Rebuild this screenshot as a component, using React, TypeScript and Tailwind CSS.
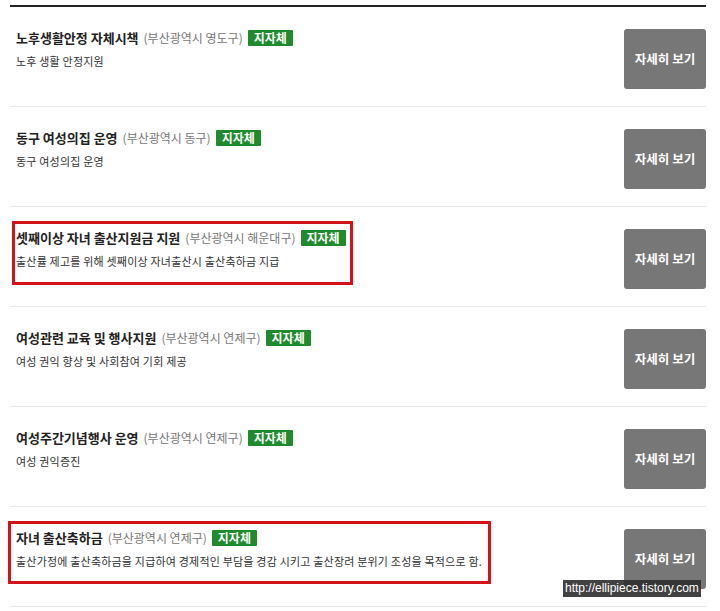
const items = [
  {
    title: "노후생활안정 자체시책",
    region: "(부산광역시 영도구)",
    desc: "노후 생활 안정지원",
    mark: null,
  },
  {
    title: "동구 여성의집 운영",
    region: "(부산광역시 동구)",
    desc: "동구 여성의집 운영",
    mark: null,
  },
  {
    title: "셋째이상 자녀 출산지원금 지원",
    region: "(부산광역시 해운대구)",
    desc: "출산률 제고를 위해 셋째이상 자녀출산시 출산축하금 지급",
    mark: "a",
  },
  {
    title: "여성관련 교육 및 행사지원",
    region: "(부산광역시 연제구)",
    desc: "여성 권익 향상 및 사회참여 기회 제공",
    mark: null,
  },
  {
    title: "여성주간기념행사 운영",
    region: "(부산광역시 연제구)",
    desc: "여성 권익증진",
    mark: null,
  },
  {
    title: "자녀 출산축하금",
    region: "(부산광역시 연제구)",
    desc: "출산가정에 출산축하금을 지급하여 경제적인 부담을 경감 시키고 출산장려 분위기 조성을 목적으로 함.",
    mark: "b",
  },
];

export default function App() {
  return (
    <div
      className="relative h-[611px] w-[720px] overflow-hidden bg-white"
      style={{ fontFamily: '"Noto Sans CJK KR", "Noto Sans", sans-serif' }}
    >
      <div className="ml-[10px] mt-[5px] w-[696px] border-t-2 border-[#222]">
        {items.map((item) => (
          <div
            key={item.title}
            className="flex h-[100px] items-start justify-between border-b border-[#e8e8e8] pl-[6px]"
          >
            <div className="relative pt-[21px]">
              {item.mark === "a" && (
                <span className="pointer-events-none absolute left-[-4px] top-[14px] h-[64px] w-[341px] border-[3px] border-[#d4121c]" />
              )}
              {item.mark === "b" && (
                <span className="pointer-events-none absolute left-[-8px] top-[14px] h-[63px] w-[483px] border-[3px] border-[#d4121c]" />
              )}
              <div className="flex items-center text-[13px] leading-[20px]">
                <span className="font-bold text-[#222]">{item.title}</span>
                <span className="ml-[5px] text-[12px] text-[#777]">{item.region}</span>
                <span className="ml-[5px] rounded-[1px] bg-[#1f8b2c] px-[6px] text-[12px] font-bold leading-[16px] text-white">
                  지자체
                </span>
              </div>
              <p className="mt-[4px] text-[11px] leading-[18px] tracking-[0.2px] text-[#333]">{item.desc}</p>
            </div>
            <button className="mt-[22px] flex h-[60px] w-[82px] items-center justify-center rounded-[3px] bg-[#777] text-[12.5px] font-bold text-white">
              자세히 보기
            </button>
          </div>
        ))}
      </div>
      <div
        className="absolute left-[563px] top-[580px] bg-[#2e2e2e]/90 px-[2px] text-[12px] leading-[17px] text-white"
        style={{ fontFamily: '"Liberation Sans", Arial, sans-serif' }}
      >
        http://ellipiece.tistory.com
      </div>
    </div>
  );
}
